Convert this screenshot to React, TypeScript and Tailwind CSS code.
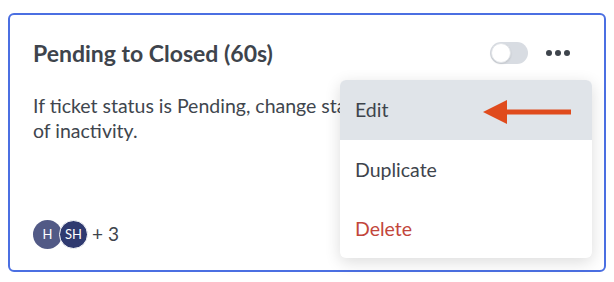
const FONT = { fontFamily: "Lato, 'Noto Sans', sans-serif" };

function Toggle() {
  return (
    <div className="w-[38px] h-[22px] rounded-full bg-[#d8dce2] flex items-center px-[1px]">
      <div className="w-[20px] h-[20px] rounded-full bg-white border border-[#e1e4e8] shadow-[0_1px_2px_rgba(0,0,0,0.12)]" />
    </div>
  );
}

function Dots() {
  return (
    <div className="flex items-center gap-[3px]">
      <div className="w-[6px] h-[6px] rounded-full bg-[#3e444c]" />
      <div className="w-[6px] h-[6px] rounded-full bg-[#3e444c]" />
      <div className="w-[6px] h-[6px] rounded-full bg-[#3e444c]" />
    </div>
  );
}

function Arrow() {
  return (
    <svg width="90" height="26" viewBox="0 0 90 26" className="absolute left-[482px] top-[99px]">
      <polygon points="1,13 25,1 25,25" fill="#e04b1d" />
      <rect x="22" y="10.5" width="67" height="5" fill="#e04b1d" />
    </svg>
  );
}

export default function App() {
  return (
    <div className="w-[614px] h-[282px] bg-white relative" style={FONT}>
      <div className="absolute left-[8px] top-[13px] w-[598px] h-[259px] border-2 border-[#4b6fe2] rounded-[6px] px-[23px] pt-[24px] pb-[21px] flex flex-col">
        <div className="flex items-center justify-between h-[28px]">
          <div className="text-[23px] font-bold text-[#3e444c] leading-[28px]">
            Pending to Closed (60s)
          </div>
          <div className="flex items-center gap-[18px] mr-[11px]">
            <Toggle />
            <Dots />
          </div>
        </div>
        <div className="mt-[26px] text-[19.5px] leading-[25px] text-[#40464e] whitespace-nowrap">
          If ticket status is Pending, change status to Closed after 60s
          <br />
          of inactivity.
        </div>
        <div className="mt-auto flex items-center">
          <div className="w-[29px] h-[29px] rounded-full bg-[#525a86] text-white text-[13px] flex items-center justify-center">
            H
          </div>
          <div className="w-[29px] h-[29px] -ml-[3px] rounded-full bg-[#2f3a70] border border-white text-white text-[13px] flex items-center justify-center">
            SH
          </div>
          <span className="ml-[4px] text-[19px] text-[#3e444c]">+ 3</span>
        </div>
      </div>

      <div className="absolute left-[340px] top-[80px] w-[252px] h-[178px] bg-white rounded-[6px] shadow-[0_4px_16px_rgba(0,0,0,0.14)] overflow-hidden flex flex-col text-[19.5px]">
        <div className="h-[60px] bg-[#e0e4e9] flex items-center px-[15px] text-[#3e444c]">Edit</div>
        <div className="h-[59px] flex items-center px-[15px] text-[#3e444c]">Duplicate</div>
        <div className="h-[59px] flex items-center px-[15px] text-[#c2463b]">Delete</div>
      </div>

      <Arrow />
    </div>
  );
}
